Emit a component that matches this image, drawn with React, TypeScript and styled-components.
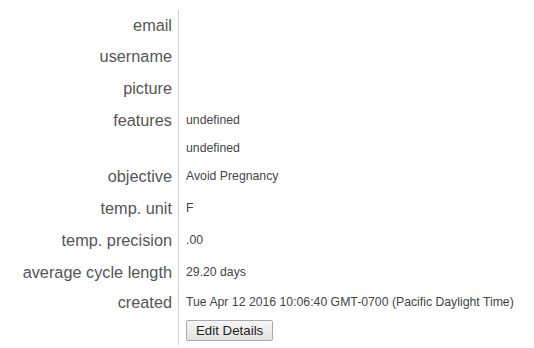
import React from "react";
import styled, { createGlobalStyle } from "styled-components";

const Global = createGlobalStyle`
  body {
    margin: 0;
    background: #fff;
    font-family: "Liberation Sans", Arial, sans-serif;
  }
`;

const Sheet = styled.div`
  padding-top: 10px;
`;

const Row = styled.div<{ $h?: number }>`
  display: grid;
  grid-template-columns: 178px 1fr;
  min-height: ${(p) => p.$h ?? 32}px;
`;

const Label = styled.div<{ $h?: number }>`
  text-align: right;
  padding-right: 6px;
  font-size: 16.3px;
  color: #555;
  height: ${(p) => p.$h ?? 32}px;
  line-height: ${(p) => (p.$h ?? 32) + 1}px;
  white-space: nowrap;
`;

const Value = styled.div`
  border-left: 1px solid #d4d4d4;
  padding-left: 7px;
`;

const Line = styled.div<{ $h?: number }>`
  font-size: 12.25px;
  color: #444;
  height: ${(p) => p.$h ?? 32}px;
  line-height: ${(p) => (p.$h ?? 32) + 1}px;
  white-space: nowrap;
`;

const Button = styled.button`
  margin-top: 4px;
  height: 21px;
  padding: 0 9px;
  font-family: "Liberation Sans", Arial, sans-serif;
  font-size: 13.3px;
  color: #222;
  background: linear-gradient(#f6f6f6, #e2e2e2);
  border: 1px solid #a9a9a9;
  border-radius: 2px;
`;

const fields: { label: string; values: string[]; h?: number }[] = [
  { label: "email", values: [""], h: 30 },
  { label: "username", values: [""] },
  { label: "picture", values: [""] },
  { label: "features", values: ["undefined", "undefined"] },
  { label: "objective", values: ["Avoid Pregnancy"] },
  { label: "temp. unit", values: ["F"] },
  { label: "temp. precision", values: [".00"] },
  { label: "average cycle length", values: ["29.20 days"] },
  {
    label: "created",
    values: ["Tue Apr 12 2016 10:06:40 GMT-0700 (Pacific Daylight Time)"],
    h: 28,
  },
];

export default function App() {
  return (
    <Sheet>
      <Global />
      {fields.map((f) => (
        <Row key={f.label} $h={f.h}>
          <Label $h={f.h}>{f.label}</Label>
          <Value>
            {f.values.map((v, i) => (
              <Line key={i} $h={i === 0 ? f.h : 24}>
                {v}
              </Line>
            ))}
          </Value>
        </Row>
      ))}
      <Row $h={29}>
        <Label $h={29} />
        <Value>
          <Button>Edit Details</Button>
        </Value>
      </Row>
    </Sheet>
  );
}
